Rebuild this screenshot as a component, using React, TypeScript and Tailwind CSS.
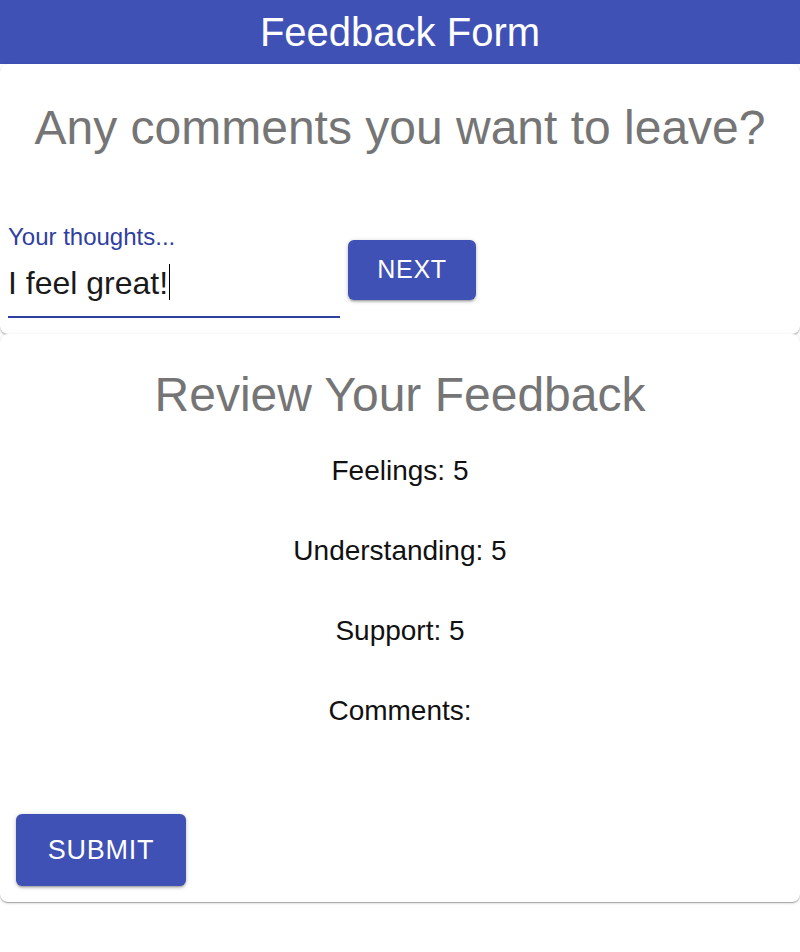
const reviewItems = [
  { label: 'Feelings', value: '5' },
  { label: 'Understanding', value: '5' },
  { label: 'Support', value: '5' },
  { label: 'Comments', value: '' },
]

const paperShadow =
  'shadow-[0_1px_3px_0_rgba(0,0,0,0.2),0_1px_1px_0_rgba(0,0,0,0.14),0_2px_1px_-1px_rgba(0,0,0,0.12)]'

export default function App() {
  return (
    <div className="min-h-[952px] bg-white font-['Liberation_Sans',Arial,sans-serif]">
      <header className="h-16 bg-[#3f51b5] text-center text-[40px] leading-[64px] text-white">
        Feedback Form
      </header>

      {/* comments step */}
      <section className={`h-[270px] rounded-lg bg-white pt-9 ${paperShadow}`}>
        <h2 className="text-center text-[48px] leading-[56px] text-[#757575]">
          Any comments you want to leave?
        </h2>
        <div className="mt-[67px] flex items-start gap-2 pl-2">
          <div className="w-[332px]">
            <label className="block text-[24px] leading-[28px] text-[#303f9f]">
              Your thoughts...
            </label>
            <div className="mt-[7px] border-b-2 border-[#303f9f] pb-[13px] text-[32px] leading-[40px] text-[#1a1a1a]">
              I feel great!
              <span className="ml-px inline-block h-[36px] w-px translate-y-[6px] bg-black align-baseline" />
            </div>
          </div>
          <button className="mt-[17px] h-[60px] w-[128px] rounded-[6px] bg-[#3f51b5] text-[25px] tracking-[0.02857em] text-white shadow-[0_1px_5px_0_rgba(0,0,0,0.2),0_2px_2px_0_rgba(0,0,0,0.14),0_3px_1px_-2px_rgba(0,0,0,0.12)]">
            NEXT
          </button>
        </div>
      </section>

      {/* review step */}
      <section className={`h-[568px] rounded-lg bg-white px-4 pt-[33px] ${paperShadow}`}>
        <h2 className="text-center text-[48px] leading-[56px] text-[#757575]">
          Review Your Feedback
        </h2>
        <div className="mt-8 flex flex-col gap-12">
          {reviewItems.map((item) => (
            <p key={item.label} className="text-center text-[28px] leading-[32px] text-[#111]">
              {item.label}: {item.value}
            </p>
          ))}
        </div>
        <button className="mt-[87px] h-[72px] w-[170px] rounded-[6px] bg-[#3f51b5] text-[27px] tracking-[0.02857em] text-white shadow-[0_1px_5px_0_rgba(0,0,0,0.2),0_2px_2px_0_rgba(0,0,0,0.14),0_3px_1px_-2px_rgba(0,0,0,0.12)]">
          SUBMIT
        </button>
      </section>
    </div>
  )
}
